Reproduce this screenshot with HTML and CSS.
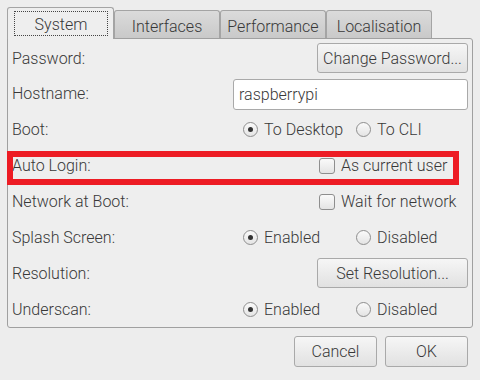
FILE: index.html
```html
<!DOCTYPE html>
<html lang="en">
<head>
  <meta charset="UTF-8" />
  <title>Raspberry Pi Configuration</title>
  <link rel="stylesheet" href="styles.css">
</head>
<body>
  <div class="tabs">
    <div class="tab active"><span class="focus">System</span></div>
    <div class="tab">Interfaces</div>
    <div class="tab">Performance</div>
    <div class="tab">Localisation</div>
  </div>

  <div class="panel">
    <div class="row">
      <span class="label">Password:</span>
      <button class="btn wide">Change Password...</button>
    </div>
    <div class="row">
      <span class="label">Hostname:</span>
      <input class="entry" type="text" value="raspberrypi">
    </div>
    <div class="row">
      <span class="label">Boot:</span>
      <div class="radios">
        <label class="opt"><span class="radio on"></span>To Desktop</label>
        <label class="opt"><span class="radio"></span>To CLI</label>
      </div>
    </div>
    <div class="row marked">
      <span class="label">Auto Login:</span>
      <label class="check"><span class="box"></span>As current user</label>
      <span class="mark"></span>
    </div>
    <div class="row">
      <span class="label">Network at Boot:</span>
      <label class="check"><span class="box"></span>Wait for network</label>
    </div>
    <div class="row">
      <span class="label">Splash Screen:</span>
      <div class="radios">
        <label class="opt"><span class="radio on"></span>Enabled</label>
        <label class="opt"><span class="radio"></span>Disabled</label>
      </div>
    </div>
    <div class="row">
      <span class="label">Resolution:</span>
      <button class="btn wide">Set Resolution...</button>
    </div>
    <div class="row">
      <span class="label">Underscan:</span>
      <div class="radios">
        <label class="opt"><span class="radio on"></span>Enabled</label>
        <label class="opt"><span class="radio"></span>Disabled</label>
      </div>
    </div>
  </div>

  <div class="actions">
    <button class="btn action">Cancel</button>
    <button class="btn action">OK</button>
  </div>
</body>
</html>
```

FILE: styles.css
```css
body {
  margin: 0;
  padding: 7px 7px 0;
  background: #ededed;
  font-family: Roboto, 'Liberation Sans', sans-serif;
  font-size: 16px;
  font-weight: 300;
  color: #383838;
}

.tabs {
  display: flex;
  align-items: flex-end;
  height: 31px;
}

.tab {
  box-sizing: border-box;
  width: 106px;
  height: 28px;
  padding-top: 3px;
  border: 1px solid #a4a4a4;
  border-bottom: none;
  border-radius: 3px 3px 0 0;
  background: linear-gradient(#dbdbdb, #c9c9c9);
  display: flex;
  align-items: center;
  justify-content: center;
}

.tab.active {
  width: 107px;
  height: 32px;
  margin-bottom: -1px;
  padding: 3px 5px 3px 6px;
  background: #eeeeee;
  position: relative;
  z-index: 1;
}

.focus {
  box-sizing: border-box;
  width: 95px;
  height: 25px;
  border: 1px dotted #444;
  display: flex;
  align-items: center;
  justify-content: center;
  padding-top: 1px;
}

.panel {
  box-sizing: border-box;
  height: 290px;
  padding: 4px 4px 0;
  border: 1px solid #a0a0a0;
  border-radius: 0 3px 3px 3px;
  background: #eeeeee;
  display: flex;
  flex-direction: column;
  gap: 5.9px;
}

.row {
  height: 30px;
  display: flex;
  align-items: center;
}

.label {
  flex: 1;
}

.btn {
  box-sizing: border-box;
  height: 30px;
  border: 1px solid #a9a9a9;
  border-radius: 3px;
  background: linear-gradient(#f6f6f6, #e1e1e1);
  font-family: inherit;
  font-size: 16px;
  font-weight: 300;
  color: #383838;
  padding: 0;
}

.btn.wide {
  width: 151px;
}

.entry {
  box-sizing: border-box;
  width: 235px;
  height: 31px;
  margin-top: 1px;
  border: 1px solid #a9a9a9;
  border-radius: 3px;
  background: #ffffff;
  padding: 0 5px;
  font-family: inherit;
  font-size: 16px;
  font-weight: 300;
  color: #383838;
}

.radios {
  width: 225px;
  display: grid;
  grid-template-columns: 113px 112px;
}

.opt,
.check {
  display: flex;
  align-items: center;
}

.radio {
  box-sizing: border-box;
  width: 15px;
  height: 15px;
  margin-right: 6px;
  border: 1px solid #8e8e8e;
  border-radius: 50%;
  background: linear-gradient(#fafafa, #e4e4e4);
  display: flex;
  align-items: center;
  justify-content: center;
}

.radio.on::after {
  content: "";
  width: 5px;
  height: 5px;
  border-radius: 50%;
  background: #333;
}

.check {
  width: 149px;
}

.box {
  box-sizing: border-box;
  width: 16px;
  height: 16px;
  margin-right: 6px;
  border: 1px solid #8e8e8e;
  border-radius: 3px;
  background: linear-gradient(#fafafa, #e4e4e4);
}

.marked {
  position: relative;
}

.mark {
  position: absolute;
  top: 0;
  left: -5px;
  right: 9px;
  height: 34px;
  box-sizing: border-box;
  border: 6px solid #ed1c24;
}

.actions {
  display: flex;
  justify-content: flex-end;
  gap: 8px;
  margin-top: 8px;
  padding-right: 5px;
}

.btn.action {
  width: 83px;
  height: 31px;
}
```
